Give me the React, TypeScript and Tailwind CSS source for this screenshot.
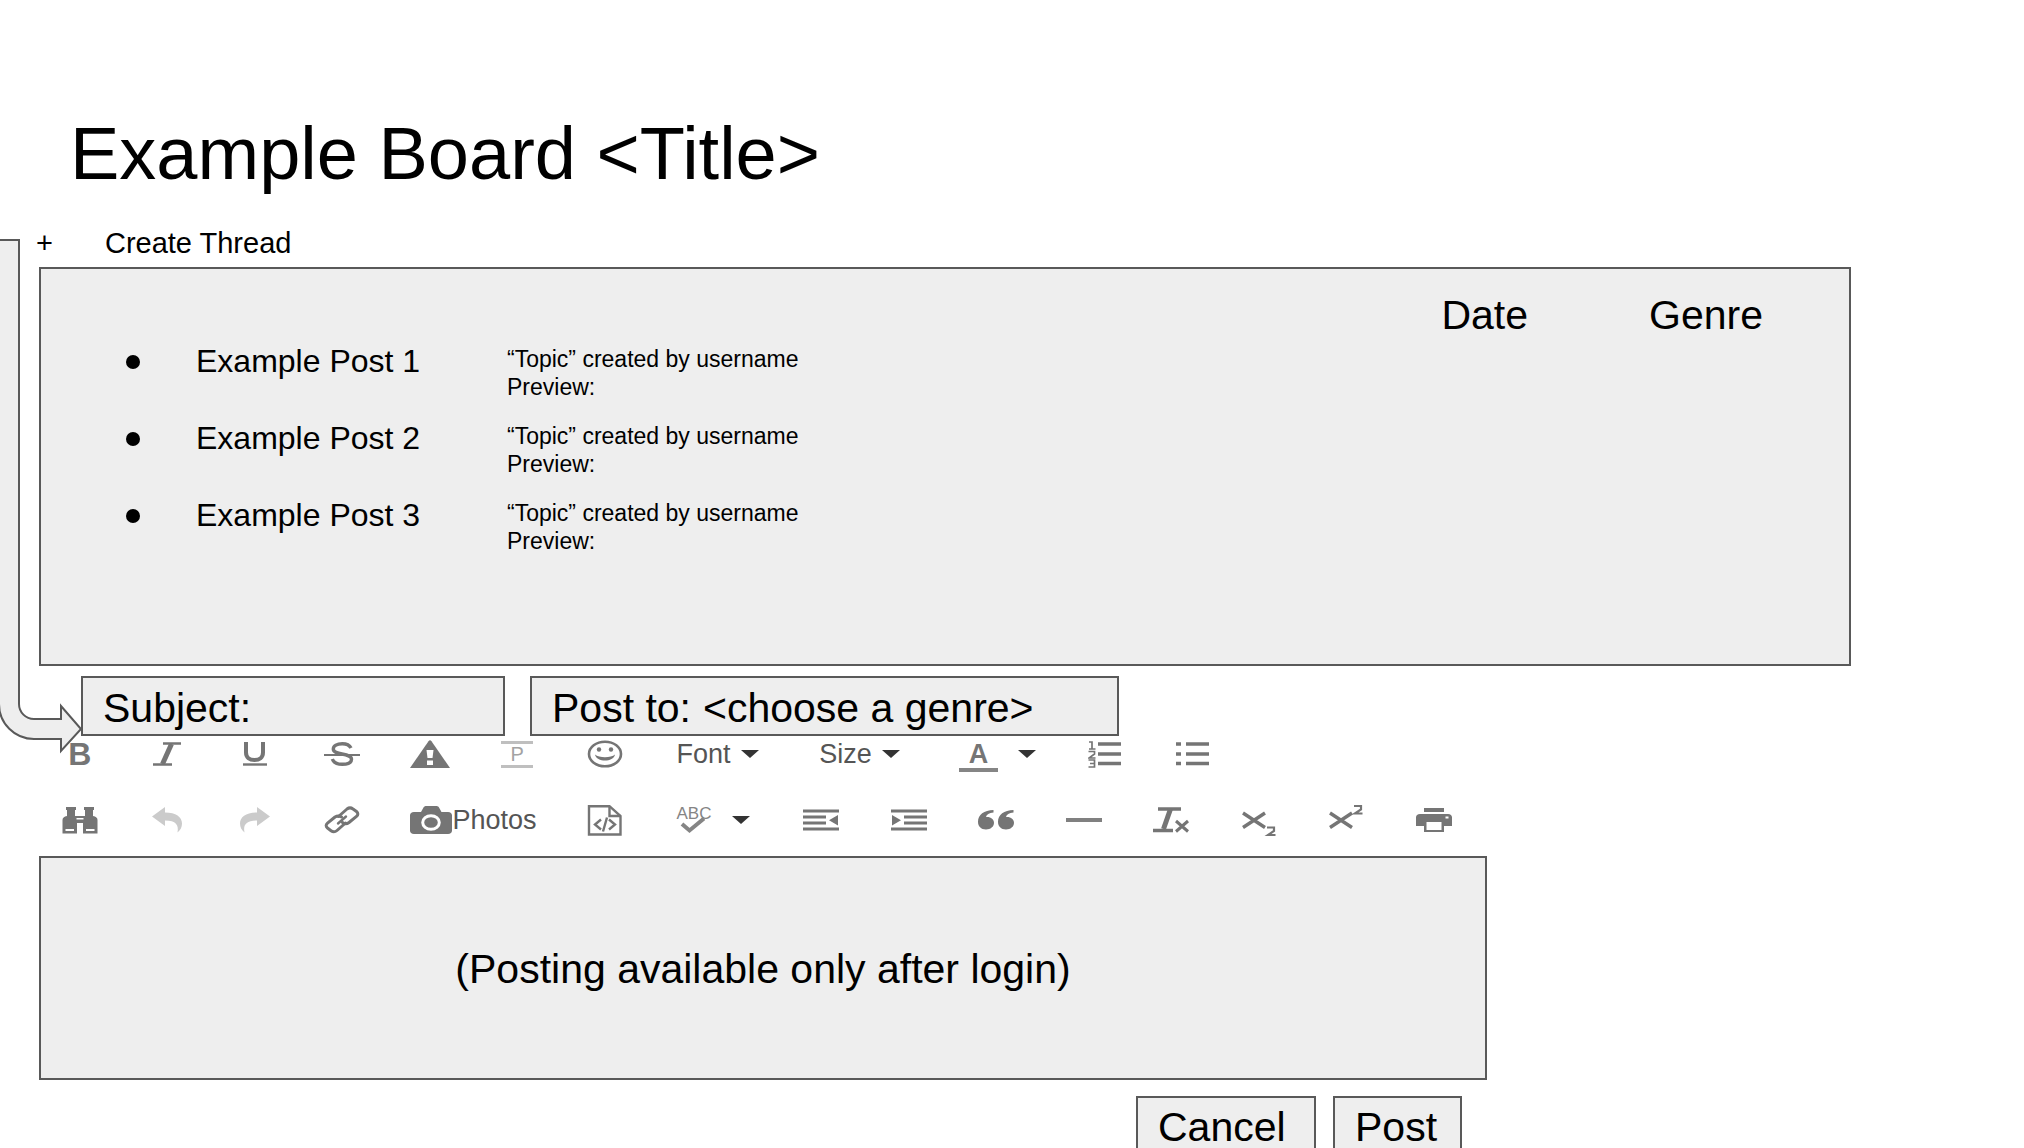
import type { ReactNode } from "react";

const posts = ["Example Post 1", "Example Post 2", "Example Post 3"];

function Tool({ label, children, className = "" }: { label: string; children: ReactNode; className?: string }) {
  return (
    <button type="button" aria-label={label} className={`flex h-full items-center justify-center text-[#757575] ${className}`}>
      {children}
    </button>
  );
}

function Icon({ w, h, children }: { w: number; h: number; children: ReactNode }) {
  return (
    <svg width={w} height={h} viewBox={`0 0 ${w} ${h}`} fill="none" stroke="currentColor" className="shrink-0" aria-hidden="true">
      {children}
    </svg>
  );
}

function Caret() {
  return (
    <Icon w={18} h={8}>
      <path d="M0 0H18L9 8Z" fill="#333" stroke="none" />
    </Icon>
  );
}

function FirstToolRow() {
  return (
    <div className="grid h-9 grid-cols-[repeat(7,175fr)_276fr_292fr_260fr_168fr_184fr_483fr]">
      <Tool label="Bold" className="text-[32px] leading-9 font-bold">B</Tool>
      <Tool label="Italic">
        <Icon w={28} h={24}>
          <path d="M10 1.5H28M0 22.5H19" strokeWidth="2.6" />
          <path d="M18.5 2L9.5 22" strokeWidth="5" />
        </Icon>
      </Tool>
      <Tool label="Underline">
        <Icon w={26} h={24}>
          <path d="M4 0V10.5C4 15.5 7.5 18 12.5 18S21 15.5 21 10.5V0" strokeWidth="4" />
          <path d="M1 22.5H25" strokeWidth="2.4" />
        </Icon>
      </Tool>
      <Tool label="Strikethrough">
        <Icon w={36} h={24}>
          <path d="M27 6C25.5 3 22.5 1.7 18.3 1.7C13 1.7 9.3 3.8 9.3 7C9.3 10 12.5 11 18 12C24.5 13.2 27.5 14.2 27.5 17.2C27.5 20.4 23.8 22.3 18.3 22.3C13 22.3 9.5 20.5 8.3 17" strokeWidth="3.4" />
          <path d="M0 13H36" strokeWidth="2.2" />
        </Icon>
      </Tool>
      <Tool label="Spoiler">
        <Icon w={40} h={28}>
          <path d="M18.500 1.200Q20 -0.800 21.500 1.200L40 28H0Z" fill="currentColor" stroke="none" />
          <path d="M16.500 10H23.500L22.500 18H17.500ZM17 20.500H23V25H17Z" fill="#fff" stroke="none" />
        </Icon>
      </Tool>
      <Tool label="Paragraph">
        <span className="flex h-[27px] w-8 items-center justify-center border-y-3 border-[#bfbfbf] text-[20px] leading-5 text-[#a3a3a3]">P</span>
      </Tool>
      <Tool label="Emoji">
        <Icon w={36} h={28}>
          <ellipse cx="18" cy="14" rx="16" ry="12.3" strokeWidth="2.6" />
          <ellipse cx="12" cy="9.5" rx="2.2" ry="2.2" fill="currentColor" stroke="none" />
          <ellipse cx="24" cy="9.5" rx="2.2" ry="2.2" fill="currentColor" stroke="none" />
          <path d="M8 14.5C12 18 24 18 28 14.5C26.5 22.5 9.5 22.5 8 14.5Z" fill="currentColor" stroke="none" />
        </Icon>
      </Tool>
      <Tool label="Font" className="gap-[10px] text-[27px] leading-8">
        <span className="text-[#555]">Font</span>
        <Caret />
      </Tool>
      <Tool label="Size" className="gap-[10px] text-[27px] leading-8">
        <span className="text-[#555]">Size</span>
        <Caret />
      </Tool>
      <Tool label="Text colour" className="gap-5">
        <span className="mt-1 flex h-8 w-[39px] flex-col items-center border-b-4 border-[#858585] text-[27px] leading-7 font-bold">A</span>
        <Caret />
      </Tool>
      <Tool label="Numbered list">
        <Icon w={33} h={28}>
          <path d="M10 4H33M10 14H33M10 23.5H33" strokeWidth="3.4" />
          <path d="M1 2H4V9M1 9H7.500M0.500 11.500H6.500V14L1 18H7.500M0.500 20H6.500V27H0.500M2 23.500H6.500" strokeWidth="1.700" />
        </Icon>
      </Tool>
      <Tool label="Bulleted list">
        <Icon w={33} h={28}>
          <path d="M10 4H33M10 14H33M10 23.5H33M0 4H5M0 14H5M0 23.5H5" strokeWidth="3.4" />
        </Icon>
      </Tool>
    </div>
  );
}

function SecondToolRow() {
  return (
    <div className="grid h-[38px] grid-cols-[repeat(4,175fr)_350fr_175fr_258fr_repeat(8,175fr)_5fr]">
      <Tool label="Find">
        <Icon w={36} h={27}>
          <g fill="currentColor" stroke="none">
            <path d="M4 0H14V3H13V9H23V3H22V0H32V3H31V9C34 9.500 35.500 11 35.500 13V26.500H21V16H15V26.500H0.500V13C0.500 11 2 9.500 5 9V3H4Z" />
            <path d="M3.500 22H12V24H3.500ZM24 22H32.500V24H24Z" fill="#fff" />
            <path d="M14.500 11H21.500V12.500H14.500Z" fill="#fff" />
          </g>
        </Icon>
      </Tool>
      <Tool label="Undo" className="text-[#cbcbcb]">
        <Icon w={31} h={26}>
          <path d="M0 9.500L13 0V5.500C24 5.500 30 10 30 16.500C30 20 28.500 23 25.500 25.500C27 18 24 13.500 13 13.500V19Z" fill="currentColor" stroke="none" />
        </Icon>
      </Tool>
      <Tool label="Redo" className="text-[#cbcbcb]">
        <Icon w={31} h={26}>
          <path d="M31 9.500L18 0V5.500C7 5.500 1 10 1 16.500C1 20 2.500 23 5.500 25.500C4 18 7 13.500 18 13.500V19Z" fill="currentColor" stroke="none" />
        </Icon>
      </Tool>
      <Tool label="Insert link">
        <Icon w={36} h={28}>
          <g strokeWidth="3" strokeLinejoin="round" strokeLinecap="round">
            <path d="M14.500 10.500L23 3C25 1.500 27 1.500 29 3L32.500 5.500C34.300 7 34.300 8.800 32.500 10.300L25 16.500C23 18 20.500 18 18.500 16.500" />
            <path d="M21.500 17L13 24.500C11 26.200 9 26.200 7 24.700L3.500 22C1.700 20.500 1.700 18.700 3.500 17.200L11 11C13 9.700 15.500 9.700 17.500 11" />
            <path d="M14 17.500L22 10.500" strokeWidth="2.400" />
          </g>
        </Icon>
      </Tool>
      <Tool label="Photos" className="text-[27px] leading-8">
        <Icon w={42} h={28}>
          <path d="M4 6H11L13.500 1.500C14 0.500 15 0 16.500 0H26C27.500 0 28.500 0.500 29 1.500L31.500 6H38C40.500 6 42 7.500 42 9.500V24.500C42 26.500 40.500 28 38 28H4C1.500 28 0 26.500 0 24.500V9.500C0 7.500 1.500 6 4 6Z" fill="currentColor" stroke="none" />
          <ellipse cx="21" cy="16.500" rx="8.300" ry="6.800" stroke="#fff" strokeWidth="3" />
        </Icon>
        <span className="text-[#555]">Photos</span>
      </Tool>
      <Tool label="Source code">
        <Icon w={36} h={31}>
          <path d="M2 1.200H22.500L33.500 11V29.500H2Z" strokeWidth="2.400" />
          <path d="M22.500 1.200V11H33.500" strokeWidth="2.400" />
          <path d="M14 14.500L8 19.500L14 24.500M22 14.500L28 19.500L22 24.500M20 12.500L16 26.500" strokeWidth="2.400" />
        </Icon>
      </Tool>
      <Tool label="Check spelling" className="gap-5">
        <span className="relative h-7 w-9 text-[17px] leading-4 text-[#858585]">
          ABC
          <svg width="26" height="17" viewBox="0 0 26 17" className="absolute top-[11px] left-1" aria-hidden="true">
            <path d="M2 7L9.500 13.500L24 1.500" fill="none" stroke="currentColor" strokeWidth="4" />
          </svg>
        </span>
        <Caret />
      </Tool>
      <Tool label="Decrease indent">
        <Icon w={36} h={22}>
          <path d="M0 2H36M0 8H23M0 14H23M0 20H36" strokeWidth="3.200" />
          <path d="M35 6V16.500L26 11.300Z" fill="currentColor" stroke="none" />
        </Icon>
      </Tool>
      <Tool label="Increase indent">
        <Icon w={36} h={22}>
          <path d="M0 2H36M13 8H36M13 14H36M0 20H36" strokeWidth="3.200" />
          <path d="M1 6V16.500L10 11.300Z" fill="currentColor" stroke="none" />
        </Icon>
      </Tool>
      <Tool label="Quote">
        <Icon w={36} h={20}>
          <path d="M15.500 0V2.500C11 3 8.500 4.500 8 7C12.500 6.500 16 9 16 12.800C16 16.800 12.500 19.500 8 19.500C3 19.500 0 16.500 0 11.800C0 4.500 6 0.200 15.500 0ZM35.500 0V2.500C31 3 28.500 4.500 28 7C32.500 6.500 36 9 36 12.800C36 16.800 32.500 19.500 28 19.500C23 19.500 20 16.500 20 11.800C20 4.500 26 0.200 35.500 0Z" fill="currentColor" stroke="none" />
        </Icon>
      </Tool>
      <Tool label="Horizontal rule">
        <span className="h-1 w-9 bg-[#808080]" />
      </Tool>
      <Tool label="Clear formatting">
        <Icon w={37} h={26}>
          <path d="M5 2H28M0 23.500H20" strokeWidth="3.400" />
          <path d="M17.500 2L10.500 22" strokeWidth="5" />
          <path d="M23 14L35 24.500M35 14L23 24.500" strokeWidth="3" />
        </Icon>
      </Tool>
      <Tool label="Subscript">
        <Icon w={34} h={32}>
          <path d="M1 9L23 23.500M23 9L1 23.500" strokeWidth="3.400" />
          <path d="M25 23.500H32V27L26 31H33.500" strokeWidth="2.200" />
        </Icon>
      </Tool>
      <Tool label="Superscript">
        <Icon w={34} h={32}>
          <path d="M1 9L23 23.500M23 9L1 23.500" strokeWidth="3.400" />
          <path d="M25 2H32V5.500L26 9.500H33.500" strokeWidth="2.200" />
        </Icon>
      </Tool>
      <Tool label="Print">
        <Icon w={36} h={24}>
          <path d="M8 0H28V4H8ZM4 6H32C34.500 6 36 7.500 36 9.500V18H28V24H8V18H0V9.500C0 7.500 1.500 6 4 6Z" fill="currentColor" stroke="none" />
          <path d="M10.500 14H25.500V22H10.500ZM29.500 8.500H32.500V10.500H29.500Z" fill="#fff" stroke="none" />
        </Icon>
      </Tool>
    </div>
  );
}

export default function App() {
  return (
    <main className="relative h-screen overflow-hidden bg-white pt-28 pl-9 font-['Liberation_Sans',Arial,sans-serif] text-black">
      <h1 className="ml-[34px] text-[74px] leading-[84px]">Example Board &lt;Title&gt;</h1>
      <button type="button" className="mt-[31px] flex gap-[52px] text-[29px] leading-8">
        <span>+</span>
        <span>Create Thread</span>
      </button>

      <section aria-label="Threads" className="mt-2 mr-[173px] ml-[3px] min-h-[399px] border-2 border-[#595959] bg-[#eee] pt-[22px]">
        <div className="mb-1 flex justify-end gap-[121px] pr-[86px] text-[41px] leading-12">
          <span>Date</span>
          <span>Genre</span>
        </div>
        <ul>
          {posts.map((post) => (
            <li key={post} className="flex h-[77px] items-start pl-[85px]">
              <span className="mt-3 size-[14px] shrink-0 rounded-full bg-black" />
              <a href="#" className="ml-14 w-[311px] text-[32px] leading-9">{post}</a>
              <p className="mt-[2px] text-[23px] leading-7">
                “Topic” created by username
                <br />
                Preview:
              </p>
            </li>
          ))}
        </ul>
      </section>

      <form>
        <div className="mt-[10px] ml-[45px] flex gap-[25px] text-[41px] leading-12">
          <label className="flex h-[60px] w-[424px] border-2 border-[#595959] bg-[#eee] pt-[6px] pl-5">
            Subject:
            <input name="subject" className="h-12 min-w-0 flex-1 bg-transparent pl-3 outline-none" />
          </label>
          <label className="flex h-[60px] w-[589px] border-2 border-[#595959] bg-[#eee] pt-[6px] pl-5">
            Post to:
            <select name="genre" className="ml-3 h-12 appearance-none bg-transparent outline-none">
              <option>&lt;choose a genre&gt;</option>
            </select>
          </label>
        </div>

        <div role="toolbar" aria-label="Formatting" className="mb-[17px] flex max-w-[1444px] flex-col gap-[29px]">
          <FirstToolRow />
          <SecondToolRow />
        </div>

        <div className="ml-[3px] max-w-[1448px]">
          <textarea
            aria-label="Message"
            readOnly
            defaultValue="(Posting available only after login)"
            className="block h-56 w-full resize-none border-2 border-[#595959] bg-[#eee] pt-[87px] text-center text-[41px] leading-12 outline-none"
          />
          <div className="mt-4 flex justify-end gap-[17px] pr-[25px] text-[41px] leading-10">
            <button type="button" className="h-[62px] w-[180px] border-2 border-[#595959] bg-[#eee] pl-5 text-left">Cancel</button>
            <button type="submit" className="h-[62px] w-[129px] border-2 border-[#595959] bg-[#eee] pl-5 text-left">Post</button>
          </div>
        </div>
      </form>

      <svg width="84" height="520" viewBox="0 0 84 520" className="pointer-events-none absolute top-[236px] left-0" aria-hidden="true">
        <path d="M-4 4H19V468A15 15 0 0 0 34 483H61V470L81 493L61 515V503H34A35 35 0 0 1 -1 468Z" fill="#eee" stroke="#595959" strokeWidth="2" />
      </svg>
    </main>
  );
}
